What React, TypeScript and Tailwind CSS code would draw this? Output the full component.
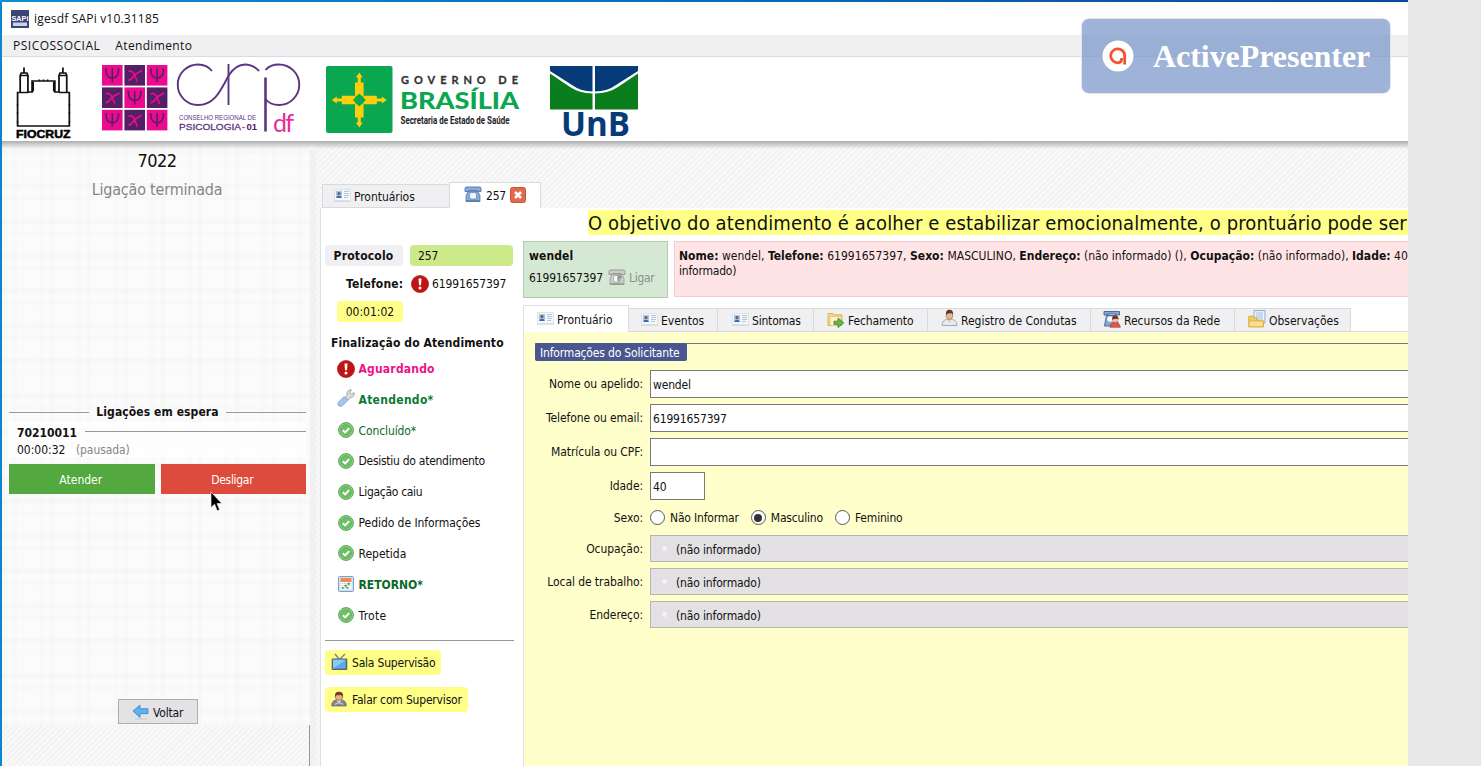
import type { ReactNode } from "react";

const cardIcon = (
  <svg width="17" height="13" viewBox="0 0 17 13" className="mb-[2px] shrink-0">
    <rect x="0.5" y="0.5" width="16" height="11" fill="#f7f8fa" stroke="#dfe2e6" />
    <rect x="2" y="2" width="6" height="7" fill="#9fc6ea" />
    <circle cx="5" cy="4.5" r="1.500" fill="#7b5a4c" />
    <path d="M2.400 9c.2-3 5-3 5.200 0z" fill="#2f6db5" />
    <path d="M10 2.500h5M10 4.500h5M10 6.500h5M10 8.500h4" stroke="#a9bccd" strokeWidth="0.9" />
    <path d="M0 12.300h17" stroke="#c9ccd0" strokeWidth="0.7" />
  </svg>
);

function PhoneIcon({ muted = false }: { muted?: boolean }) {
  const body = muted ? "#c9cdc9" : "#86abd9";
  const line = muted ? "#8f958f" : "#4f73a8";
  return (
    <svg width="18" height="17" viewBox="0 0 18 17" className="mb-[2px] shrink-0">
      <path d="M1 2.500Q1 1 2.500 1h13Q17 1 17 2.500V5.500h-4V4.500H5v1H1z" fill={body} stroke={line} strokeWidth="0.9" />
      <path d="M4 5.500h10l2 4v6H2v-6z" fill={body} stroke={line} strokeWidth="0.7" />
      <rect x="5.500" y="6.500" width="7" height="6.500" rx="2" fill="#f5f8fb" stroke={line} strokeWidth="0.6" />
      <path d="M2 15h14" stroke={line} strokeWidth="1.400" />
      {muted && <path d="M9.500 6.500h4v3h-2v3h-2z" fill="#8d918d" />}
    </svg>
  );
}

const alertIcon = (
  <svg width="18" height="18" viewBox="0 0 18 18" className="shrink-0">
    <circle cx="9" cy="9" r="8.600" fill="#c01414" stroke="#a30d0d" strokeWidth="0.6" />
    <path d="M7.500 3.400h3L10 10.300H8z" fill="#fff" />
    <circle cx="9" cy="13" r="1.500" fill="#fff" />
  </svg>
);

const okIcon = (
  <svg width="16" height="16" viewBox="0 0 16 16" className="mb-px shrink-0">
    <circle cx="8" cy="8" r="7.400" fill="#8fd088" stroke="#55a552" />
    <circle cx="8" cy="8" r="5.400" fill="#6fbe68" stroke="#56a852" strokeWidth="0.7" />
    <path d="M4.800 8.200l2.300 2.200 4.100-4.300" fill="none" stroke="#fff" strokeWidth="2" />
  </svg>
);

const wrenchIcon = (
  <svg width="18" height="18" viewBox="0 0 18 18" className="mb-[3px] shrink-0">
    <path d="M8 8.500l2-2.500Q9 2.500 12.500.7l1.800.3-1.300 2.700 1.300 1.200 2.800-1.200q1 4-3.500 5l-3 2.500z" fill="#d9dadb" stroke="#96989b" strokeWidth="0.8" />
    <path d="M7.200 7.700l3.600 3.600-5.300 5.300Q3.500 18.200 1.600 16.500.1 14.500 1.900 12.700z" fill="#a9c3f0" stroke="#7592c9" strokeWidth="0.8" />
  </svg>
);

const calendarIcon = (
  <svg width="16" height="16" viewBox="0 0 16 16" className="mb-px shrink-0">
    <rect x="0.500" y="0.500" width="15" height="15" rx="1" fill="#cfe0f5" stroke="#7f9fcb" />
    <rect x="2.500" y="2.500" width="11" height="11" fill="#fff" />
    <rect x="2.500" y="2" width="11" height="4" fill="#ee8a4c" />
    <path d="M3.500 7.500h9M3.500 9.500h9M3.500 11.800h7" stroke="#b9c5bd" strokeWidth="0.9" strokeDasharray="1.800 .8" />
    <path d="M9.500 6.700h2.500v2H9.500zM6.500 8.700H9v2H6.500zM3.800 11h2v1.800h-2zM8.500 11h2v1.800h-2z" fill="#5b9e68" />
  </svg>
);

const tvIcon = (
  <svg width="17" height="18" viewBox="0 0 17 18" className="mb-[2px] shrink-0">
    <path d="M8 6L4 1M9 6l5-5" stroke="#6d7f8d" strokeWidth="1.300" />
    <rect x="0.700" y="5.500" width="15.600" height="11.500" rx="1" fill="#59616b" />
    <rect x="2" y="6.700" width="12.800" height="9" fill="#5aa9ec" />
    <path d="M2 15.700V6.700h12.800z" fill="#8cc7f6" />
  </svg>
);

const operatorIcon = (
  <svg width="16" height="16" viewBox="0 0 16 16" className="mb-[2px] shrink-0">
    <path d="M.8 15Q.3 9.800 5 9h6q4.700.8 4.200 6z" fill="#85878a" stroke="#5f6164" strokeWidth="0.7" />
    <path d="M5.500 9h5L8 13z" fill="#d4d6d8" />
    <circle cx="8" cy="5.500" r="3.800" fill="#e8b283" stroke="#8a5a34" strokeWidth="0.6" />
    <path d="M4 6Q3.500.6 8 .7 12.500.6 12 6 10.500 3.500 8 4.200 5.500 3.500 4 6z" fill="#6e3c1e" />
    <path d="M4 13.500q4-3.500 8 0" fill="none" stroke="#c9cbcd" strokeWidth="1.200" />
  </svg>
);

const folderIcon = (
  <svg width="18" height="16" viewBox="0 0 18 16" className="mb-[1px] shrink-0">
    <path d="M1 13.500V1.500h5l1 1.300h8v10.700z" fill="#f5d68a" stroke="#d3ac4e" strokeWidth="0.800" />
    <path d="M3 4.500h11v9H3z" fill="#fdf3cd" stroke="#dfc06b" strokeWidth="0.700" />
    <path d="M7 9.200h4V6l5.800 4.800L11 15.600v-3.200H7z" fill="#6ab445" stroke="#3f8326" strokeWidth="0.800" />
  </svg>
);

const personIcon = (
  <svg width="17" height="18" viewBox="0 0 17 18" className="mb-[4px] shrink-0">
    <path d="M1 16.500q0-5 4.500-6h6q4.500 1 4.500 6z" fill="#e6e9f2" stroke="#8e96ae" strokeWidth="0.800" />
    <path d="M6 10.300h5L8.500 14z" fill="#f1c8a2" />
    <ellipse cx="8.500" cy="6" rx="3.300" ry="4.200" fill="#e9bb92" stroke="#855b40" strokeWidth="0.600" />
    <path d="M5 5.500Q4.500.7 8.500.7t3.500 4.800Q10.500 2.800 5 5.500z" fill="#5c3d2c" />
  </svg>
);

const networkIcon = (
  <svg width="18" height="18" viewBox="0 0 18 18" className="mb-[3px] shrink-0">
    <path d="M1 1.500h15.500V5H13V4H5v1H1z" fill="#7fa6d6" stroke="#41618f" strokeWidth="0.900" />
    <path d="M3.500 5.500h10l2 10.500H1.500z" fill="#86abd8" stroke="#41618f" strokeWidth="0.900" />
    <circle cx="7" cy="9" r="2.800" fill="#f5f8fb" />
    <path d="M7 17.300q0-4.800 5-4.800t5.300 4.800z" fill="#e2574b" stroke="#a9382f" strokeWidth="0.600" />
    <circle cx="12.300" cy="9.300" r="2.900" fill="#f1bd94" />
    <path d="M9.100 9.800Q8.800 5.700 12.300 5.700t3.300 4.100Q14.300 7.500 9.100 9.800z" fill="#7a2f22" />
  </svg>
);

const notesIcon = (
  <svg width="18" height="18" viewBox="0 0 18 18" className="mb-[3px] shrink-0">
    <path d="M6 .6h11V13H6z" fill="#eef4fb" stroke="#7ea1cf" strokeWidth="0.900" />
    <path d="M8 3h7M8 5h7M8 7h7M8 9h7" stroke="#8fb0d8" strokeWidth="0.800" />
    <path d="M.8 16.800V6.200h4.500l1 1.600H9v3h6.300v6z" fill="#f3cd5e" stroke="#caa03a" strokeWidth="0.800" />
    <path d="M1 11h14.300v5.800H1z" fill="#fbe08a" stroke="#d1a943" strokeWidth="0.700" />
  </svg>
);

function PsiGrid() {
  const cells = [0, 1, 2, 3, 4, 5, 6, 7, 8];
  return (
    <svg width="66" height="66" viewBox="0 0 66 66" className="shrink-0">
      {cells.map((n) => {
        const x = (n % 3) * 22.4;
        const y = Math.floor(n / 3) * 22.4;
        const pink = n % 2 === 0;
        return (
          <g key={n} transform={`translate(${x} ${y})`}>
            <rect width="20.600" height="20.600" fill={pink ? "#ec0a8e" : "#542065"} />
            {pink ? (
              <path d="M10.300 3.500v13.500M4 4.500q0 8.500 6.300 8.500t6.300-8.500M3 5l2-1M15.600 4l2 1" fill="none" stroke="#542065" strokeWidth="1.600" />
            ) : (
              <path d="M4 6.500Q8 4.500 10.500 10.500T12.500 17M17.500 5.500L10.300 9.500Q8 14 4 15.500" fill="none" stroke="#ec0a8e" strokeWidth="1.700" />
            )}
          </g>
        );
      })}
    </svg>
  );
}

function Logos() {
  return (
    <div className="flex h-[84px] items-start bg-white [font-stretch:normal]">
      <svg width="60" height="76" viewBox="0 0 60 76" className="mt-[7px] ml-[13px] shrink-0">
        <path
          transform="scale(1.035 1)"
          d="M2.500 62V28.500h2.500V11.500L6 9h5.500l1 2.500V28h4V17h22v11h4V11.500L43.500 9H49l1 2.500V28.500h2.500V62zM8.700 9V3.500M46.300 9V3.500M5.500 11.500h6.500M43 11.500h6.500M5 28.500h8M42.500 28.500h8M23.500 17v-1.500M27.500 17v-1.500M31.500 17v-1.500M17.500 18v9.500M37.500 18v9.500M1.500 41h2M1.500 49h2M1.500 58h2M51.500 41h2M51.500 49h2M51.500 58h2"
          fill="none"
          stroke="#111"
          strokeWidth="1.700"
        />
        <text x="1" y="74" fontFamily="Liberation Sans" fontWeight="700" fontSize="11.500" textLength="54.500" lengthAdjust="spacingAndGlyphs" fill="#000" stroke="#000" strokeWidth="0.500">FIOCRUZ</text>
      </svg>
      <div className="mt-[7.5px] ml-[27px] shrink-0">
        <PsiGrid />
      </div>
      <svg width="126" height="76" viewBox="0 0 126 76" className="mt-[5px] ml-[8px] shrink-0">
        <g fill="none" stroke="#5c3580" strokeWidth="1.900">
          <path d="M36 9Q31 2.500 22 2.500A20 20 0 0 0 22 43C40 43 46 25 53 13Q60 2.500 69 2.500 77 2.500 83 9" />
          <path d="M52.500 2v41" />
          <path d="M89.500 15.500V69.500" strokeWidth="2.600" />
          <path d="M89.500 8Q94 2.500 103 2.500A20 20 0 0 1 103 43Q94 43 89.500 37" />
        </g>
        <g fontFamily="Liberation Sans" fill="#5c3580">
          <text x="3" y="57.500" fontSize="6.500" textLength="77" lengthAdjust="spacingAndGlyphs">CONSELHO REGIONAL DE</text>
          <text x="3" y="68" fontSize="9.500" textLength="62" lengthAdjust="spacingAndGlyphs" stroke="#5c3580" strokeWidth="0.300">PSICOLOGIA</text>
          <text x="66" y="68" fontSize="9.500" fontWeight="700" fill="#ec0a8e">-</text>
          <text x="70.500" y="68" fontSize="9.500" fontWeight="700" fill="#542065">01</text>
        </g>
        <text x="97" y="69.500" fontFamily="Lato" fontSize="25" textLength="21" fill="#ea2b95">df</text>
      </svg>
      <svg width="67" height="68" viewBox="0 0 67 68" className="mt-[9px] ml-[24px] shrink-0">
        <rect width="66.500" height="67" rx="2" fill="#0ba650" />
        <g fill="#fdce0c">
          {[0, 90, 180, 270].map((a) => (
            <path key={a} transform={`rotate(${a} 33.3 34)`} d="M29 29.500V16.500h2.800V11.500H29.800L33.300 6.500 36.800 11.500H34.800V16.500h2.800v13L33.300 33z" />
          ))}
        </g>
        <path d="M33.300 27.500l6.500 6.500-6.500 6.500-6.500-6.500z" fill="#0ba650" />
      </svg>
      <svg width="124" height="68" viewBox="0 0 124 68" className="mt-[8px] ml-[7px] shrink-0 overflow-visible">
        <text x="1" y="18.500" fontFamily="Lato" fontWeight="700" fontSize="11" textLength="117" fill="#333" stroke="#333" strokeWidth="0.300">GOVERNO DE</text>
        <text x="0" y="44" fontFamily="Lato" fontWeight="900" fontSize="23.500" textLength="119" lengthAdjust="spacingAndGlyphs" fill="#0ba650">BRASÍLIA</text>
        <text x="0.500" y="58.500" fontFamily="Roboto" fontWeight="700" fontSize="10.500" textLength="109" lengthAdjust="spacingAndGlyphs" fill="#222">Secretaria de Estado de Saúde</text>
      </svg>
      <svg width="90" height="76" viewBox="0 0 90 76" className="mt-[8px] ml-[26px] shrink-0 overflow-visible">
        <path d="M0 1h42.500v25.500Q30 26 22 20L0 6zM45 1h43v5L66 20q-8 6-21 6.500z" fill="#073b78" />
        <path d="M0 8.500L20 22q9 6 22.500 6.500V44.500H0zM88 8.500L68 22q-9 6-23 6.500V44.500h43z" fill="#0a7d1c" />
        <text x="11" y="70.500" fontFamily="Open Sans" fontWeight="700" fontSize="34" textLength="69" lengthAdjust="spacingAndGlyphs" fill="#073b78">UnB</text>
      </svg>
    </div>
  );
}

function HoldPanel() {
  return (
    <aside className="flex w-[308px] shrink-0 flex-col">
      <div className="flex h-[584px] flex-col bg-[#fbfbfb] bg-[repeating-linear-gradient(90deg,rgba(0,0,0,0.009)_0_5px,transparent_5px_11px,rgba(0,0,0,0.012)_11px_15px,transparent_15px_37px),repeating-linear-gradient(0deg,rgba(0,0,0,0.009)_0_4px,transparent_4px_11px,rgba(0,0,0,0.012)_11px_17px,transparent_17px_35px)]">
        <div className="mt-[9px] h-[22px] pl-[2px] text-center text-[18px] leading-[22px] tracking-[-0.5px]">7022</div>
        <div className="mt-[7px] h-[22px] pl-[2px] text-center text-[16px] leading-[22px] tracking-[-0.2px] text-[#858585]">Ligação terminada</div>
        <div className="mt-[201px] ml-[7px] flex h-[20px] w-[297px] items-center">
          <div className="h-px flex-1 bg-[#999]" />
          <div className="w-[137px] text-center font-bold tracking-[0.09px] whitespace-nowrap">Ligações em espera</div>
          <div className="h-px flex-1 bg-[#999]" />
        </div>
        <div className="ml-[7px] w-[297px] bg-white/70 pt-[3px]">
          <div className="flex h-[16px] items-center pl-[8px]">
            <b className="w-[68px]">70210011</b>
            <div className="mb-[3px] h-px flex-1 bg-[#999]" />
          </div>
          <div className="flex h-[17px] items-center pl-[8px]">
            <span className="w-[59px]">00:00:32</span>
            <span className="tracking-[-0.1px] text-[#858585]">(pausada)</span>
          </div>
        </div>
        <div className="mt-[6px] ml-[7px] flex h-[30px] w-[297px] gap-[6px] text-white">
          <button className="flex-1 bg-[#53a840] pt-px pr-[2px]">Atender</button>
          <button className="flex-1 bg-[#dc4b3b] pt-px pr-[2px] tracking-[-0.3px]">Desligar</button>
        </div>
        <div className="mt-auto mb-[1px] ml-[116px] flex h-[25px] w-[80px] items-center gap-[4px] border border-[#adadad] bg-[#e3e2e4] pl-[13px]">
          <svg width="17" height="16" viewBox="0 0 17 16" className="shrink-0">
            <path d="M1 7L8 1v3.700h8v5H8V13.500z" fill="#5db2ec" stroke="#3384c4" strokeWidth="0.800" />
            <path d="M3 15h12" stroke="#cfd0d2" strokeWidth="1.200" />
          </svg>
          <span className="pt-[2px] tracking-[-0.2px]">Voltar</span>
        </div>
      </div>
      <div className="flex-1 border-r border-[#999] bg-[repeating-linear-gradient(135deg,#f3f3f3_0_2px,#f9f9f9_2px_4px)]" />
    </aside>
  );
}

type ActionItem = { icon: ReactNode; label: string; style: string };

const actions: ActionItem[] = [
  { icon: alertIcon, label: "Aguardando", style: "font-bold tracking-[0.2px] text-[#ee1289]" },
  { icon: wrenchIcon, label: "Atendendo*", style: "font-bold tracking-[0.3px] text-[#0c7a36]" },
  { icon: okIcon, label: "Concluído*", style: "tracking-[-0.1px] text-[#0c6a26]" },
  { icon: okIcon, label: "Desistiu do atendimento", style: "tracking-[-0.27px]" },
  { icon: okIcon, label: "Ligação caiu", style: "tracking-[-0.3px]" },
  { icon: okIcon, label: "Pedido de Informações", style: "tracking-[-0.05px]" },
  { icon: okIcon, label: "Repetida", style: "" },
  { icon: calendarIcon, label: "RETORNO*", style: "font-bold text-[#0c6a26]" },
  { icon: okIcon, label: "Trote", style: "tracking-[0.3px]" },
];

function CallColumn() {
  return (
    <div className="flex w-[202px] shrink-0 flex-col items-start pt-[9px] pl-[4px]">
      <div className="flex h-[21px] gap-[7px]">
        <b className="flex w-[78px] items-center justify-center rounded-[4px] bg-[#f0eff1] pr-[1px] tracking-[0.2px]">Protocolo</b>
        <div className="flex w-[103px] items-center rounded-[4px] bg-[#cdea8b] pl-[8px] tracking-[-0.1px]">257</div>
      </div>
      <div className="mt-[8px] flex h-[20px] items-center pl-[21px]">
        <b className="w-[65px] tracking-[0.2px] whitespace-nowrap">Telefone:</b>
        {alertIcon}
        <span className="ml-[3px] tracking-[-0.12px]">61991657397</span>
      </div>
      <div className="mt-[7px] ml-[12px] flex h-[21px] w-[66px] items-center justify-center rounded-[4px] bg-[#ffff88]">00:01:02</div>
      <b className="mt-[12px] ml-[6px] h-[18px] leading-[18px] tracking-[0.12px] whitespace-nowrap">Finalização do Atendimento</b>
      <div className="mt-[1.5px] ml-[12px]">
        {actions.map((a) => (
          <div key={a.label} className={`flex h-[30.85px] items-center whitespace-nowrap ${a.style}`}>
            <span className="flex w-[18px] justify-center">{a.icon}</span>
            <span className="ml-[3.5px]">{a.label}</span>
          </div>
        ))}
      </div>
      <div className="mt-[9px] h-px w-[189px] bg-[#999]" />
      <div className="mt-[9px] flex h-[25px] items-center rounded-[4px] bg-[#ffff88] pr-[6px] pl-[6px]">
        {tvIcon}
        <span className="ml-[4px] pt-[1px] tracking-[-0.2px] whitespace-nowrap">Sala Supervisão</span>
      </div>
      <div className="mt-[12px] flex h-[25px] items-center rounded-[4px] bg-[#ffff88] pr-[6px] pl-[6px]">
        {operatorIcon}
        <span className="ml-[5px] pt-[1px] tracking-[-0.18px] whitespace-nowrap">Falar com Supervisor</span>
      </div>
    </div>
  );
}

type TabItem = { icon: ReactNode; label: string; style: string };

const tabs: TabItem[] = [
  { icon: cardIcon, label: "Eventos", style: "w-[89px] pl-[12px]" },
  { icon: cardIcon, label: "Sintomas", style: "w-[96px] pl-[14px] tracking-[-0.2px]" },
  { icon: folderIcon, label: "Fechamento", style: "w-[114px] pl-[13px] tracking-[-0.1px]" },
  { icon: personIcon, label: "Registro de Condutas", style: "w-[163px] pl-[13px]" },
  { icon: networkIcon, label: "Recursos da Rede", style: "w-[144px] pl-[12px]" },
  { icon: notesIcon, label: "Observações", style: "w-[116px] pl-[13px]" },
];

function Field({ label, height, children }: { label: string; height: string; children: ReactNode }) {
  return (
    <div className={`flex ${height}`}>
      <label className="flex w-[119px] shrink-0 items-center justify-end tracking-[-0.08px] whitespace-nowrap">{label}</label>
      <div className="ml-[7px] flex min-w-0 flex-1 items-center">{children}</div>
    </div>
  );
}

function Input({ value, size }: { value: string; size: string }) {
  return <div className={`flex h-[28px] items-center border border-[#7a7a7a] bg-white pt-[2px] pl-[2px] tracking-[-0.16px] ${size}`}>{value}</div>;
}

function Combo() {
  return (
    <div className="flex h-[27px] w-full items-center border border-r-0 border-[#b5b5b0] bg-[#e3e1e3]">
      <span className="ml-[11px] size-[5px] rounded-full bg-[#f3f3f3]" />
      <span className="ml-[9px] pt-[3px] tracking-[-0.15px]">(não informado)</span>
    </div>
  );
}

function Radio({ label, checked = false }: { label: string; checked?: boolean }) {
  return (
    <span className="flex items-center gap-[5px] tracking-[-0.18px] whitespace-nowrap">
      <span className="flex size-[15px] items-center justify-center rounded-full border border-[#555] bg-white">
        {checked && <span className="size-[8px] rounded-full bg-[#333]" />}
      </span>
      {label}
    </span>
  );
}

function RecordPane() {
  return (
    <div className="flex min-w-0 flex-1 flex-col">
      <div className="flex h-[64px] pt-[5px] pb-px">
        <div className="h-[57px] w-[145px] shrink-0 border border-[#b3cbb1] bg-[#d5e8d4] pt-[6px] pl-[5px]">
          <b className="block h-[17px] leading-[17px] tracking-[0.1px]">wendel</b>
          <div className="mt-[3px] flex h-[20px] items-center">
            <span className="w-[79px] tracking-[-0.15px]">61991657397</span>
            <PhoneIcon muted />
            <span className="ml-[3px] tracking-[-0.3px] text-[#8b8f8b]">Ligar</span>
          </div>
        </div>
        <div className="ml-[6px] h-[56px] min-w-0 flex-1 overflow-hidden border border-r-0 border-[#f5cdd0] bg-[#ffe4e6] pt-[7px] pl-[4px] leading-[15px] tracking-[0.03px] whitespace-nowrap">
          <b>Nome:</b> wendel, <b>Telefone:</b> 61991657397, <b>Sexo:</b> MASCULINO, <b>Endereço:</b> (não informado) (), <b>Ocupação:</b> (não informado), <b>Idade:</b> 40
          <br />
          <span className="tracking-[-0.2px]">informado)</span>
        </div>
      </div>
      <div className="mt-[5px] flex h-[27px] shrink-0 items-end border-b border-[#dadada]">
        <div className="-mb-px flex h-[27px] w-[106px] items-center gap-[3px] border border-b-0 border-[#dedede] bg-white pl-[13px]">
          {cardIcon}
          <span className="pt-[2px]">Prontuário</span>
        </div>
        {tabs.map((t) => (
          <div key={t.label} className={`flex h-[23px] items-center gap-[3px] border-t border-r border-[#dadada] bg-[#f0eff1] whitespace-nowrap ${t.style}`}>
            {t.icon}
            <span className="pt-[1px]">{t.label}</span>
          </div>
        ))}
      </div>
      <div className="min-h-0 flex-1 border-l border-[#e2e2e2] bg-[#ffffcc] pt-[11px]">
        <div className="ml-[11px] flex h-[18px] items-start border-t border-[#777]">
          <div className="-mt-px h-[18px] w-[152px] shrink-0 rounded-[2px] bg-[#4a5690] pl-[5px] leading-[20px] tracking-[-0.17px] whitespace-nowrap text-white">Informações do Solicitante</div>
        </div>
        <div className="mt-[6px]">
          <Field label="Nome ou apelido:" height="h-[34px]"><Input value="wendel" size="w-full border-r-0" /></Field>
          <Field label="Telefone ou email:" height="h-[34px]"><Input value="61991657397" size="w-full border-r-0" /></Field>
          <Field label="Matrícula ou CPF:" height="h-[34px]"><Input value="" size="w-full border-r-0" /></Field>
          <Field label="Idade:" height="h-[34px]"><Input value="40" size="w-[55px]" /></Field>
          <Field label="Sexo:" height="h-[29px]">
            <div className="flex gap-[12px]">
              <Radio label="Não Informar" />
              <Radio label="Masculino" checked />
              <Radio label="Feminino" />
            </div>
          </Field>
          <Field label="Ocupação:" height="h-[33px]"><Combo /></Field>
          <Field label="Local de trabalho:" height="h-[33px]"><Combo /></Field>
          <Field label="Endereço:" height="h-[33px]"><Combo /></Field>
        </div>
      </div>
    </div>
  );
}

export default function App() {
  return (
    <div className="relative flex h-[766px] w-[1481px] overflow-hidden bg-[#e8e8e8] font-['DejaVu_Sans_Condensed','DejaVu_Sans',sans-serif] text-[12px] text-[#111] [font-stretch:condensed]">
      <div className="flex w-[1408px] flex-col bg-linear-to-r from-[#0a8fd0] to-[#0a4a9c] pt-[2px]">
        <div className="flex min-h-0 flex-1 border-l-2 border-[#0a86cf]">
          <div className="flex min-w-0 flex-1 flex-col overflow-hidden bg-white">
            <div className="flex h-[33px] shrink-0 items-center pl-[9px] font-['Open_Sans',sans-serif] text-[12px] [font-stretch:normal]">
              <svg width="18" height="18" viewBox="0 0 18 18">
                <rect width="18" height="18" fill="#3b4575" />
                <text x="0.500" y="10.500" fontFamily="Liberation Sans" fontWeight="700" fontSize="7" textLength="17" lengthAdjust="spacingAndGlyphs" fill="#fff">SAPi</text>
                <rect x="2" y="12.500" width="14" height="3.500" fill="#cdd2e4" />
              </svg>
              <span className="ml-[5px] tracking-[0.18px]">igesdf SAPi v10.31185</span>
            </div>
            <div className="flex h-[22px] shrink-0 items-center gap-[15px] border-b border-[#dbdadc] bg-[#f0eff1] pl-[11px] font-['Open_Sans',sans-serif] text-[12px] [font-stretch:normal]">
              <span className="tracking-[0.5px]">PSICOSSOCIAL</span>
              <span className="tracking-[0.35px]">Atendimento</span>
            </div>
            <Logos />
            <div className="flex min-h-0 flex-1">
              <HoldPanel />
              <div className="mt-[8px] w-[6px] shrink-0 bg-[#f1f0f2]" />
              <main className="flex min-w-0 flex-1 flex-col bg-[repeating-linear-gradient(135deg,#f3f3f3_0_2px,#f9f9f9_2px_4px)] pt-[41px] pl-[4px]">
                <div className="flex h-[26px] shrink-0 items-end pl-[2px]">
                  <div className="flex h-[24px] w-[127px] items-center gap-[3px] border border-r-0 border-[#dadada] bg-[#f0eff1] pl-[11px]">
                    {cardIcon}
                    <span className="pt-[2px] tracking-[-0.05px]">Prontuários</span>
                  </div>
                  <div className="flex h-[26px] w-[92px] items-center border border-b-0 border-[#dadada] bg-white pl-[14px]">
                    <PhoneIcon />
                    <span className="ml-[4px] pt-[1px] tracking-[-0.2px]">257</span>
                    <svg width="16" height="16" viewBox="0 0 16 16" className="mb-[2px] ml-[4px]">
                      <rect x="0.500" y="0.500" width="15" height="15" rx="2" fill="#e2694c" stroke="#c9543a" />
                      <path d="M5 5l6 6M11 5l-6 6" stroke="#fff" strokeWidth="2.500" />
                    </svg>
                  </div>
                </div>
                <div className="flex min-h-0 flex-1 flex-col border-l border-[#e0e0e0] bg-white">
                  <div className="flex h-[28px] shrink-0 pt-[2px] pl-[267px]">
                    <div className="h-[25px] flex-1 bg-[#ffff88] text-[20px] leading-[27px] tracking-[0.12px] whitespace-nowrap">O objetivo do atendimento é acolher e estabilizar emocionalmente, o prontuário pode ser</div>
                  </div>
                  <div className="flex min-h-0 flex-1">
                    <CallColumn />
                    <RecordPane />
                  </div>
                </div>
              </main>
            </div>
          </div>
        </div>
      </div>
      <div className="pointer-events-none absolute top-[141px] left-[2px] h-[8px] w-[1406px] bg-linear-to-b from-[#adadad] to-transparent" />
      <div className="absolute top-[18px] left-[1081px] flex h-[76px] w-[310px] items-center rounded-[8px] border border-white/70 bg-[#7e99c9]/75 pl-[20px]">
        <svg width="32" height="32" viewBox="0 0 32 32">
          <circle cx="16" cy="16" r="15.500" fill="#fff" />
          <path d="M22.700 24.500V15A7 7 0 1 0 15.700 22.800Q19.700 22.800 19.700 18" fill="none" stroke="#f0532f" strokeWidth="2.800" />
        </svg>
        <span className="ml-[19px] font-['Liberation_Serif',serif] text-[32px] font-bold tracking-[-0.05px] text-white">ActivePresenter</span>
      </div>
      <svg width="13" height="20" viewBox="0 0 13 20" className="absolute top-[492px] left-[210px]">
        <path d="M1 0v15.500l3.600-3.300L7.200 18.800l2.500-1L7 11.500h4.800z" fill="#000" stroke="#fff" strokeWidth="0.600" />
      </svg>
    </div>
  );
}
